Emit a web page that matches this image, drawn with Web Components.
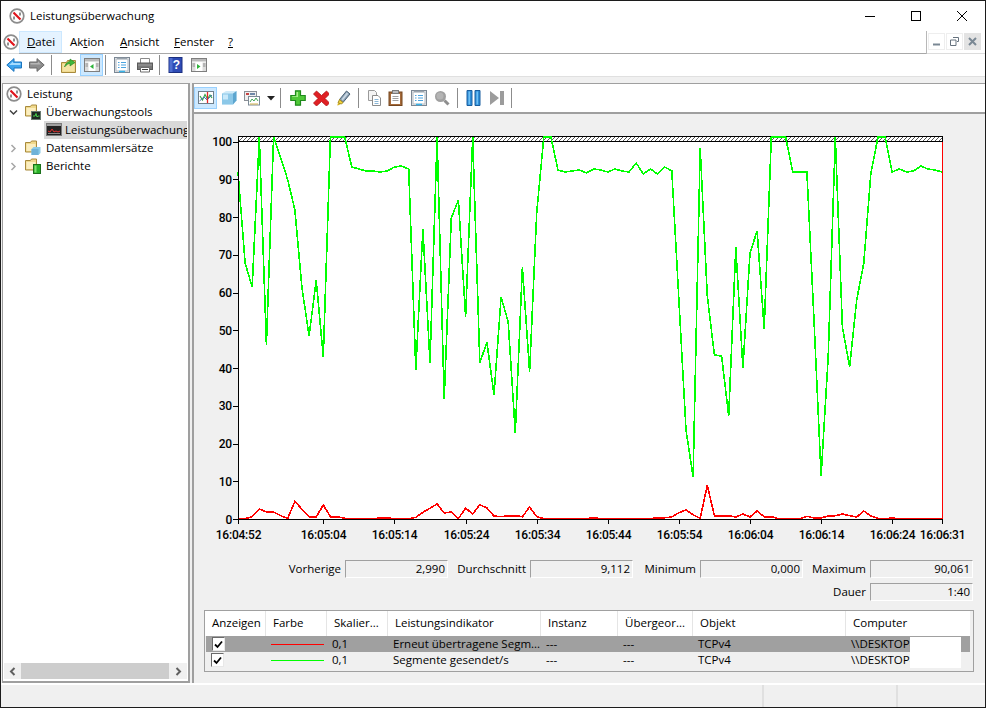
<!DOCTYPE html>
<html lang="de">
<head>
<meta charset="utf-8">
<title>Leistungsüberwachung</title>
<style>
  html, body { margin: 0; padding: 0; }
  body { font: 11.5px/16px "Open Sans", "Noto Sans", sans-serif; color: #000; background: #f0f0f0; }
</style>
</head>
<body>
<perf-window>
  <title-bar slot="title">Leistungsüberwachung</title-bar>
  <menu-bar slot="menu">
    <menu-entry active style="width:43px"><u>D</u>atei</menu-entry>
    <menu-entry style="width:50px">Ak<u>t</u>ion</menu-entry>
    <menu-entry style="width:54px"><u>A</u>nsicht</menu-entry>
    <menu-entry style="width:54px"><u>F</u>enster</menu-entry>
    <menu-entry style="width:24px"><u>?</u></menu-entry>
  </menu-bar>
  <main-toolbar slot="toolbar"></main-toolbar>
  <tree-pane slot="tree">
    <tree-item icon="compass" level="0">Leistung</tree-item>
    <tree-item icon="foldermon" level="1" arrow="open">Überwachungstools</tree-item>
    <tree-item icon="perf" level="2" selected>Leistungsüberwachung</tree-item>
    <tree-item icon="foldercube" level="1" arrow="closed">Datensammlersätze</tree-item>
    <tree-item icon="folderrep" level="1" arrow="closed">Berichte</tree-item>
  </tree-pane>
  <chart-toolbar slot="charttools"></chart-toolbar>
  <perf-chart slot="chart"></perf-chart>
  <stat-panel slot="stats">
    <stat-box value="2,990">Vorherige</stat-box>
    <stat-box value="9,112">Durchschnitt</stat-box>
    <stat-box value="0,000">Minimum</stat-box>
    <stat-box value="90,061">Maximum</stat-box>
    <stat-box value="1:40" style="grid-column:4">Dauer</stat-box>
  </stat-panel>
  <counter-legend slot="legend"></counter-legend>
  <status-bar slot="status"></status-bar>
</perf-window>

<script>
const ICONS = {
  compass: `<circle cx="8" cy="8" r="6.8" fill="#fff" stroke="#8c8c8c" stroke-width="1.7"/><path d="M4.5 4.5L11.5 11.5" stroke="#e0141c" stroke-width="2.2"/><path d="M5 8.5v3M11 4.5v3" stroke="#222" stroke-width="1"/>`,
  back: `<path d="M.8 8L8 1.6V5h7.5v6H8v3.4z" fill="#3ea4ee" stroke="#1c74bd"/><path d="M3 8L7 4.5V6h7.5v2z" fill="#a6dcff"/>`,
  forward: `<path d="M15.2 8L8 1.6V5H.5v6H8v3.4z" fill="#8c8c8c" stroke="#6b6b6b"/><path d="M1.5 6H9V4.5L12 7.5H1.5z" fill="#b5b5b5"/>`,
  folderup: `<path d="M.5 5.5h5l1-2h8v12H.5z" fill="#ecd27f" stroke="#a88a3c"/><path d="M1.5 7h12v7.5h-12z" fill="#f5e3a4"/><path d="M3.5 10C5 5 8 4.5 9 4.5V2l5 3.500-5 3.500V6.500C7.500 6.500 5.500 7.500 3.500 10z" fill="#3fb83a" stroke="#23811f" stroke-width=".6"/>`,
  paneleft: `<rect x=".5" y="1.500" width="15" height="13" fill="#fff" stroke="#7e7e7e"/><rect x="1" y="2" width="14" height="2.500" fill="#b9b9b9"/><path d="M1 5.500h3.500v8.500H1zM11.500 5.500H15v8.500h-3.500z" fill="#dcdcdc"/><path d="M1.500 7h2.500M1.500 9h2.500M12 7h2.500M12 9h2.500" stroke="#8e8e8e"/><path d="M9.500 7v5L6 9.500z" fill="#2eb33a"/>`,
  paneright: `<rect x=".5" y="1.500" width="15" height="13" fill="#fff" stroke="#7e7e7e"/><rect x="1" y="2" width="14" height="2.500" fill="#b9b9b9"/><path d="M1 5.500h3.500v8.500H1zM11.500 5.500H15v8.500h-3.500z" fill="#dcdcdc"/><path d="M1.500 7h2.500M1.500 9h2.500M12 7h2.500M12 9h2.500" stroke="#8e8e8e"/><path d="M6 7v5l3.500-2.500z" fill="#2eb33a"/>`,
  props: `<rect x=".5" y=".5" width="15" height="15" fill="#eee" stroke="#7b8794"/><rect x="2" y="2" width="12" height="12" fill="#fff" stroke="#b0b8c0"/><path d="M3 1.500h10" stroke="#9aa4ae" stroke-width="1.500"/><path d="M4 5.500h1.500M7 5.500h5M4 8h1.500M7 8h5M4 10.500h1.500M7 10.500h5" stroke="#4aa3df"/><path d="M5 14.500h6" stroke="#37b3ea" stroke-width="1.500"/>`,
  print: `<path d="M3.500 1.500h9v5h-9z" fill="#fff" stroke="#8a8a8a"/><rect x=".5" y="6" width="15" height="6.500" fill="#787878" stroke="#5a5a5a"/><path d="M1 8h14" stroke="#9e9e9e"/><path d="M3.500 10.500h9v4.500h-9z" fill="#fff" stroke="#6d6d6d"/><path d="M5 12.500h6" stroke="#3d3d3d"/>`,
  help: `<rect x="1" y=".5" width="13" height="15" fill="#2e4bb5" stroke="#1b2f80"/><path d="M1.500 1h3v14h-3z" fill="#4e6ed0"/><text x="8.500" y="12" font-family="Liberation Sans" font-size="12" font-weight="700" fill="#fff" text-anchor="middle">?</text>`,
  graph: `<rect x=".5" y="1.500" width="15" height="12" fill="#fff" stroke="#6f7f8c"/><path d="M2 6l2.500 4L7 4.500 9.500 9 12 5l2 3" fill="none" stroke="#38a84a" stroke-width="1.200"/><path d="M1.500 11L6 7l3 3 5-5" fill="none" stroke="#4a6fb8"/><path d="M9.500 2v11" stroke="#e3262b" stroke-width="1.300"/>`,
  cube: `<path d="M1 3.500L5 1h10.500v9.500L12 14.500H1z" fill="#cfeaf8"/><path d="M1 3.500h11v11H1z" fill="#8cc8e8"/><path d="M12 3.500l3.500-2.500v9.500L12 14.500z" fill="#5da6cf"/><path d="M2 4.500h5v5H2z" fill="#c9e9fa"/>`,
  report: `<rect x=".5" y="1.500" width="12" height="9" fill="#eee" stroke="#8a8f96"/><path d="M2 3h3v2H2z" fill="#c74343"/><path d="M6 3h5v2H6z" fill="#6e88a8"/><rect x="4.500" y="6.500" width="11" height="8.500" fill="#fff" stroke="#7c8a96"/><path d="M6 12l2-3 2 2 2-3 2 3" fill="none" stroke="#46a85a"/><path d="M6 14h8" stroke="#d1b34b"/>`,
  plus: `<path d="M5.500.8h5v4.700h4.700v5h-4.700v4.700h-5v-4.700H.8v-5h4.700z" fill="#4fc838" stroke="#1f8a1c" stroke-width="1.200"/><path d="M6.500 2h1.500v5H2.200v-.8h4.300z" fill="#a8ee8c"/>`,
  cross: `<path d="M3.500 1L8.500 5.500 13.500 1l3 3-4.500 4.500 4.500 4.500-3 3-5-4.500-5 4.500-3-3L5 8.500.5 4z" fill="#e02024" stroke="#b01418" stroke-width=".8"/>`,
  pen: `<path d="M10.500 1l3.500 3-7 8.500-3.500-3z" fill="#8aa0b4" stroke="#4c6074"/><path d="M3.500 9.500l3.500 3-1.500 1.500-3.500-1z" fill="#f2d43a" stroke="#a38a20"/><path d="M2 13l-.8 2.500 3-.8z" fill="#d7b21e"/><path d="M10.800 2.500l1.500 1.300-5.500 6.700-1.300-1.200z" fill="#c9d6e2"/>`,
  copy: `<path d="M1.500.5h6l2 2v8h-8z" fill="#f4f4f4" stroke="#9a9a9a"/><path d="M5.500 5.500h5.500l2.500 2.500v7.500h-8z" fill="#fff" stroke="#8b8b8b"/><path d="M7.500 9.500h4M7.500 11.500h4M7.500 13.500h4" stroke="#8ab6d6"/>`,
  paste: `<rect x="1" y="2" width="13" height="13.500" fill="#a56a3a" stroke="#74461f"/><rect x="3" y="4" width="9" height="10" fill="#fff"/><rect x="4.500" y=".5" width="6" height="3" fill="#bcbcbc" stroke="#7a7a7a"/><path d="M4.500 6.500h6M4.500 8.500h6M4.500 10.500h6" stroke="#a0a0a0"/>`,
  glass: `<circle cx="6.500" cy="6.500" r="5.500" fill="#a0a0a0"/><circle cx="6" cy="6" r="3.500" fill="#b4b4b4"/><path d="M10.500 10.500l4 4" stroke="#8e8e8e" stroke-width="3"/>`,
  pause: `<path d="M1 .5h5v15H1zM9 .5h5v15H9z" fill="#2f8fd8" stroke="#1a5fa0"/><path d="M2.500 1.500h1.500v13H2.500zM10.500 1.500h1.500v13h-1.500z" fill="#6ec0f5"/>`,
  step: `<path d="M1 1l9 7-9 7z" fill="#9c9c9c"/><path d="M11 1h4v14h-4z" fill="#9c9c9c"/>`,
  foldermon: `<path d="M.5 2.500h5l1-1.500h5v11H.5z" fill="#f0d98c" stroke="#a88a3c"/><rect x="1.500" y="4" width="9" height="7" fill="#fbeec0"/><rect x="6.500" y="7.500" width="9" height="8" fill="#1e2a22" stroke="#6a7a70"/><path d="M8 12h2l1-2.500 1 3.500 1-1h1.500" fill="none" stroke="#46d24a"/>`,
  foldercube: `<path d="M.5 2.500h5l1-1.500h5v11H.5z" fill="#f0d98c" stroke="#a88a3c"/><rect x="1.500" y="4" width="9" height="7" fill="#fbeec0"/><path d="M6.500 9l2-2h7v6l-2 2h-7z" fill="#8ccbe8"/><path d="M6.500 9h7v6h-7z" fill="#6eb2d8"/>`,
  folderrep: `<path d="M.5 2.500h5l1-1.500h5v11H.5z" fill="#f0d98c" stroke="#a88a3c"/><rect x="1.500" y="4" width="9" height="7" fill="#fbeec0"/><rect x="8.500" y="6.500" width="7" height="9" fill="#28b028" stroke="#1a701a"/><path d="M9.500 7.500h2v7h-2z" fill="#80e070"/>`,
  perf: `<rect x=".5" y="1.500" width="15" height="12" fill="#222" stroke="#7a7a7a"/><path d="M1 3h14" stroke="#a0a0a0" stroke-width="2"/><path d="M2 9l2 1 2-3 2 3 2-1 2 1 2-1" fill="none" stroke="#e03030"/><path d="M2 11.500h12" stroke="#888"/>`
};

class UiIcon extends HTMLElement {
  connectedCallback() {
    const w = this.getAttribute('w') || 16;
    this.attachShadow({ mode: 'open' }).innerHTML = `
      <style>:host { display: block; width: ${w}px; height: 16px; flex: none; } svg { display: block; }</style>
      <svg width="${w}" height="16" viewBox="0 0 16 16">${ICONS[this.getAttribute('name')]}</svg>`;
  }
}
customElements.define('ui-icon', UiIcon);

class PerfWindow extends HTMLElement {
  constructor() {
    super();
    this.attachShadow({ mode: 'open' }).innerHTML = `
      <style>
        :host { display: flex; flex-direction: column; width: 986px; height: 708px; box-sizing: border-box; border: 1px solid #1c1c1c; background: #f0f0f0; overflow: hidden; }
        #main { flex: 1; min-height: 0; display: flex; padding-left: 1px; margin-top: 6px; border-bottom: 2px solid #fff; }
        #right { flex: 1; min-width: 0; margin-left: 2px; border-left: 2px solid #9f9f9f; border-top: 1px solid #9f9f9f; display: flex; flex-direction: column; }
      </style>
      <slot name="title"></slot>
      <slot name="menu"></slot>
      <slot name="toolbar"></slot>
      <div id="main">
        <slot name="tree"></slot>
        <div id="right">
          <slot name="charttools"></slot>
          <slot name="chart"></slot>
          <slot name="stats"></slot>
          <slot name="legend"></slot>
        </div>
      </div>
      <slot name="status"></slot>`;
  }
}
customElements.define('perf-window', PerfWindow);

class TitleBar extends HTMLElement {
  constructor() {
    super();
    this.attachShadow({ mode: 'open' }).innerHTML = `
      <style>
        :host { display: flex; align-items: center; height: 30px; flex: none; background: #fff; }
        ui-icon { margin: 0 5px 0 8px; }
        #text { flex: 1; }
        .btn { width: 46px; height: 30px; display: flex; align-items: center; justify-content: center; }
        svg { display: block; }
      </style>
      <ui-icon name="compass"></ui-icon>
      <div id="text"><slot></slot></div>
      <div class="btn"><svg width="10" height="10"><path d="M0 5.500h10" stroke="#000"/></svg></div>
      <div class="btn"><svg width="10" height="10"><rect x=".5" y=".5" width="9" height="9" fill="none" stroke="#000"/></svg></div>
      <div class="btn"><svg width="10" height="10"><path d="M0 0l10 10M10 0L0 10" stroke="#000"/></svg></div>`;
  }
}
customElements.define('title-bar', TitleBar);

class MenuBar extends HTMLElement {
  constructor() {
    super();
    this.attachShadow({ mode: 'open' }).innerHTML = `
      <style>
        :host { display: flex; align-items: flex-start; height: 23px; box-sizing: border-box; flex: none; background: #fff; box-shadow: inset 0 -1px 0 #dcdcdc; }
        ui-icon { margin: 3px 0 0 2px; }
        #items { flex: 1; display: flex; height: 23px; box-sizing: border-box; border-bottom: 1px solid #a8a8a8; }
        #mdi { display: flex; gap: 1px; width: 59px; height: 23px; box-sizing: border-box; border-left: 1px solid #b8b8b8; padding: 2px 1px 0 1px; }
        .m { width: 17px; height: 17px; border: 1px solid #eee; box-sizing: border-box; display: flex; align-items: center; justify-content: center; }
        .x { background: #e3e3e3; border-color: #e3e3e3; }
      </style>
      <ui-icon name="compass"></ui-icon>
      <div id="items"><slot></slot></div>
      <div id="mdi">
        <div class="m"><svg width="9" height="9"><path d="M1 7.500h7" stroke="#7a8894" stroke-width="2"/></svg></div>
        <div class="m"><svg width="9" height="9"><path d="M3 .5h5.500v4H7M.5 3h5.500v5.500H.5z" fill="none" stroke="#66727e"/></svg></div>
        <div class="m x"><svg width="9" height="9"><path d="M1 1l7 7M8 1L1 8" stroke="#7a8894" stroke-width="2"/></svg></div>
      </div>`;
  }
}
customElements.define('menu-bar', MenuBar);

class MenuEntry extends HTMLElement {
  constructor() {
    super();
    this.attachShadow({ mode: 'open' }).innerHTML = `
      <style>
        :host { display: block; height: 22px; line-height: 21px; padding-left: 8px; box-sizing: border-box; flex: none; }
        :host([active]) { background: #e5f3ff; box-shadow: inset 0 0 0 1px #cce8ff; }
      </style>
      <slot></slot>`;
  }
}
customElements.define('menu-entry', MenuEntry);

class ToolButton extends HTMLElement {
  constructor() {
    super();
    this.attachShadow({ mode: 'open' }).innerHTML = `
      <style>
        :host { display: flex; align-items: center; justify-content: center; height: 22px; width: 23px; box-sizing: border-box; flex: none; }
        :host([on]) { background: #cce8ff; box-shadow: inset 0 0 0 1px #99d1ff; }
      </style>
      <slot></slot>`;
  }
}
customElements.define('tool-button', ToolButton);

class ToolSep extends HTMLElement {
  constructor() {
    super();
    this.attachShadow({ mode: 'open' }).innerHTML = `
      <style>:host { display: block; width: 1px; height: 20px; background: #8c8c8c; flex: none; margin: 0 3px 0 2.5px; }</style>`;
  }
}
customElements.define('tool-sep', ToolSep);

class MainToolbar extends HTMLElement {
  constructor() {
    super();
    this.attachShadow({ mode: 'open' }).innerHTML = `
      <style>
        :host { display: flex; align-items: center; height: 23px; box-sizing: border-box; flex: none; background: #fff; border-bottom: 1px solid #e0e0e0; padding-left: 1.5px; }
      </style>
      <tool-button><ui-icon name="back"></ui-icon></tool-button>
      <tool-button><ui-icon name="forward"></ui-icon></tool-button>
      <tool-sep></tool-sep>
      <tool-button style="margin-left:2px"><ui-icon name="folderup"></ui-icon></tool-button>
      <tool-button on><ui-icon name="paneleft"></ui-icon></tool-button>
      <tool-sep style="margin-left:2px"></tool-sep>
      <tool-button style="margin-left:1.500px"><ui-icon name="props"></ui-icon></tool-button>
      <tool-button><ui-icon name="print"></ui-icon></tool-button>
      <tool-sep></tool-sep>
      <tool-button style="margin-left:1.500px"><ui-icon name="help"></ui-icon></tool-button>
      <tool-button><ui-icon name="paneright"></ui-icon></tool-button>`;
  }
}
customElements.define('main-toolbar', MainToolbar);

class TreePane extends HTMLElement {
  constructor() {
    super();
    this.attachShadow({ mode: 'open' }).innerHTML = `
      <style>
        :host { display: flex; flex-direction: column; width: 188px; box-sizing: border-box; flex: none; background: #fff; border: 1px solid #9f9f9f; border-width: 1px 2px 2px 1px; }
        #list { flex: 1; padding: 1px 0 0 0; overflow: hidden; }
        #scroll { height: 16px; margin: 0 1px 2px 1px; display: flex; align-items: center; background: #f0f0f0; }
        #thumb { width: 148px; height: 16px; background: #cdcdcd; }
        .a { width: 17px; display: flex; justify-content: center; }
      </style>
      <div id="list"><slot></slot></div>
      <div id="scroll">
        <div class="a"><svg width="7" height="9"><path d="M5.500 1L2 4.500 5.500 8" fill="none" stroke="#606060" stroke-width="2"/></svg></div>
        <div id="thumb"></div>
        <div style="flex:1"></div>
        <div class="a"><svg width="7" height="9"><path d="M1.500 1L5 4.500 1.500 8" fill="none" stroke="#606060" stroke-width="2"/></svg></div>
      </div>`;
  }
}
customElements.define('tree-pane', TreePane);

class TreeItem extends HTMLElement {
  connectedCallback() {
    const level = +this.getAttribute('level');
    const arrow = this.getAttribute('arrow');
    const glyph = arrow === 'open'
      ? `<svg width="9" height="9"><path d="M1 2.500l3.500 3.500L8 2.500" fill="none" stroke="#404040" stroke-width="1.500"/></svg>`
      : arrow === 'closed'
      ? `<svg width="9" height="9"><path d="M2.500 1L6 4.500 2.500 8" fill="none" stroke="#a6a6a6" stroke-width="1.500"/></svg>`
      : '';
    const pad = [3, 22, 41][level];
    this.attachShadow({ mode: 'open' }).innerHTML = `
      <style>
        :host { display: flex; align-items: center; height: 18px; white-space: nowrap; }
        #arrow { width: 9px; flex: none; margin-left: ${pad - 16}px; margin-right: 7px; display: flex; }
        #row { flex: 1; min-width: 0; display: flex; align-items: center; height: 18px; margin-right: ${level === 2 ? 1 : 0}px; gap: 5px; overflow: hidden; }
        :host([selected]) #row { background: #d9d9d9; gap: 3px; }
        ui-icon { margin-left: ${level === 2 ? 2 : 0}px; }
      </style>
      <div id="arrow">${glyph}</div>
      <div id="row">
        <ui-icon name="${this.getAttribute('icon')}"></ui-icon>
        <span><slot></slot></span>
      </div>`;
    if (level === 0) {
      this.shadowRoot.getElementById('arrow').style.cssText = 'display:none';
      this.shadowRoot.getElementById('row').style.marginLeft = pad + 'px';
    }
  }
}
customElements.define('tree-item', TreeItem);

class ChartToolbar extends HTMLElement {
  constructor() {
    super();
    this.attachShadow({ mode: 'open' }).innerHTML = `
      <style>
        :host { display: flex; align-items: center; height: 30px; box-sizing: border-box; flex: none; background: #fff; border-bottom: 2px solid #9f9f9f; }
        #arrow { width: 9px; height: 5px; margin: 0 3px; }
      </style>
      <tool-button on><ui-icon name="graph"></ui-icon></tool-button>
      <tool-button><ui-icon name="cube"></ui-icon></tool-button>
      <tool-button style="width:24px"><ui-icon name="report"></ui-icon></tool-button>
      <svg id="arrow" width="9" height="5"><path d="M0 0h8L4 4.500z" fill="#222"/></svg>
      <tool-sep style="margin-left:1px"></tool-sep>
      <tool-button style="margin-left:2px"><ui-icon name="plus"></ui-icon></tool-button>
      <tool-button><ui-icon name="cross"></ui-icon></tool-button>
      <tool-button><ui-icon name="pen"></ui-icon></tool-button>
      <tool-sep></tool-sep>
      <tool-button style="margin-left:2px"><ui-icon name="copy"></ui-icon></tool-button>
      <tool-button style="margin-left:-2px"><ui-icon name="paste"></ui-icon></tool-button>
      <tool-button><ui-icon name="props"></ui-icon></tool-button>
      <tool-button><ui-icon name="glass"></ui-icon></tool-button>
      <tool-sep style="margin-left:3.500px"></tool-sep>
      <tool-button style="margin-left:1.500px"><ui-icon name="pause"></ui-icon></tool-button>
      <tool-button><ui-icon name="step"></ui-icon></tool-button>
      <tool-sep></tool-sep>`;
  }
}
customElements.define('chart-toolbar', ChartToolbar);

// y pixel per sample, read off the reference (x step is 704/99)
const GREEN = [172,263,287,137,345,137,158,180,210,288,336,280,357,137,137,137,167,169,171,171,172,171,167,166,169,370,229,363,137,399,218,200,317,137,363,342,395,297,322,433,267,372,213,137,137,170,172,171,170,173,169,170,172,169,171,172,163,174,169,174,167,171,300,430,477,148,296,355,356,416,247,368,253,231,329,137,137,137,172,172,172,320,476,357,137,327,367,300,263,173,137,137,172,169,172,171,166,169,170,172];
const RED_Z = [536,536,530,507,516,516,527,535,484,508,530,531,495,530,530,535,536,536,536,536,534,534,536,536,536,532,517,505,492,519,516,536,504,522,494,504,528,530,527,527,530,501,530,536,536,536,536,536,536,536,533,536,536,536,536,536,536,536,536,533,533,531,518,510,524,535,436,527,527,527,531,522,531,513,530,530,536,536,536,536,529,534,534,528,527,522,527,531,513,528,535,536,534,536,536,536,536,536,536,536];

class PerfChart extends HTMLElement {
  connectedCallback() {
    const pts = ys => ys.map((y, i) => `${(238 + i * 704 / 99).toFixed(1)},${y}`).join(' ');
    const red = RED_Z.map(z => +(340 + z / 3).toFixed(1));
    const vals = [100,90,80,70,60,50,40,30,20,10,0];
    const yLabels = vals.map((v, i) => {
      const y = 141.5 + i * 37.75;
      return `<path d="M233 ${y.toFixed(0)}.5h5" stroke="#000"/><text x="232" y="${(y + 4.500).toFixed(1)}" text-anchor="end">${v}</text>`;
    }).join('');
    const times = [[238,'16:04:52'],[323,'16:05:04'],[394,'16:05:14'],[466,'16:05:24'],[537,'16:05:34'],[608,'16:05:44'],[679,'16:05:54'],[750,'16:06:04'],[821,'16:06:14'],[892,'16:06:24'],[942,'16:06:31']];
    const xLabels = times.map(([x, t]) => `<path d="M${x}.5 519v5" stroke="#000"/><text x="${x + 0.5}" y="539" text-anchor="middle">${t}</text>`).join('');
    this.attachShadow({ mode: 'open' }).innerHTML = `
      <style>
        :host { display: block; height: 438px; flex: none; }
        svg { display: block; }
        text { font: 500 12px Roboto, sans-serif; letter-spacing: -.2px; fill: #000; }
      </style>
      <svg width="790" height="438" viewBox="194 114 790 438">
        <defs><pattern id="hatch" width="4" height="4" patternUnits="userSpaceOnUse"><rect width="4" height="4" fill="#fff"/><path d="M0 4L4 0M-1 1L1 -1M3 5L5 3" stroke="#555" stroke-width="1"/></pattern></defs>
        <rect x="238" y="142" width="704" height="377" fill="#fff"/>
        <rect x="238.500" y="136.500" width="704" height="5" fill="url(#hatch)" stroke="#000"/>
        <g shape-rendering="crispEdges">
          <polyline points="${pts(GREEN)}" fill="none" stroke="#00ff00" stroke-width="1.600"/>
          <polyline points="${pts(red)}" fill="none" stroke="#ff0000" stroke-width="1.600"/>
          <path d="M942.500 142v377" stroke="#ff0000"/>
          <path d="M238.500 137v383M238 519.500h705" stroke="#000" fill="none"/>
          ${yLabels.replace(/<text.*?<\/text>/g, '')}
          ${xLabels.replace(/<text.*?<\/text>/g, '')}
        </g>
        ${yLabels.replace(/<path.*?\/>/g, '')}
        ${xLabels.replace(/<path.*?\/>/g, '')}
      </svg>`;
  }
}
customElements.define('perf-chart', PerfChart);

class StatPanel extends HTMLElement {
  constructor() {
    super();
    this.attachShadow({ mode: 'open' }).innerHTML = `
      <style>
        :host { display: grid; grid-template-columns: 254px 185px 170px 170px; row-gap: 5px; height: 58px; flex: none; align-content: start; padding-top: 8px; box-sizing: border-box; }
      </style>
      <slot></slot>`;
  }
}
customElements.define('stat-panel', StatPanel);

class StatBox extends HTMLElement {
  connectedCallback() {
    this.attachShadow({ mode: 'open' }).innerHTML = `
      <style>
        :host { display: flex; justify-content: flex-end; align-items: center; gap: 4px; height: 18px; }
        #v { width: 103px; height: 18px; box-sizing: border-box; border: 1px solid; border-color: #a0a0a0 #fff #fff #a0a0a0; text-align: right; padding-right: 2px; line-height: 16px; }
      </style>
      <span><slot></slot></span>
      <div id="v">${this.getAttribute('value')}</div>`;
  }
}
customElements.define('stat-box', StatBox);

class CounterLegend extends HTMLElement {
  constructor() {
    super();
    const heads = ['Anzeigen','Farbe','Skalier...','Leistungsindikator','Instanz','Übergeor...','Objekt','Computer'];
    const row = (cls, color, name) => `
      <div class="row ${cls}">
        <div class="c chk"><span class="box"><svg width="9" height="9"><path d="M1 4.500l2.500 2.500L8 1.500" fill="none" stroke="#000" stroke-width="1.800"/></svg></span></div>
        <div class="c"><span class="line" style="background:${color}"></span></div>
        <div class="c">0,1</div>
        <div class="c">${name}</div>
        <div class="c">---</div>
        <div class="c">---</div>
        <div class="c">TCPv4</div>
        <div class="c">\\\\DESKTOP-</div>
      </div>`;
    this.attachShadow({ mode: 'open' }).innerHTML = `
      <style>
        :host { display: block; position: relative; width: 770px; height: 62px; margin-left: 10px; box-sizing: border-box; flex: none; border: 1px solid #a0a0a0; background: #f0f0f0; }
        .row { display: grid; grid-template-columns: 61px 61px 61px 153px 77px 75px 153px 124px; width: 765px; white-space: nowrap; }
        .head { height: 25px; background: #fff; line-height: 24px; }
        .head div { padding-left: 7px; border-right: 1px solid #e5e5e5; box-sizing: border-box; overflow: hidden; }
        .head div:last-child { border-right: 0; }
        .r { height: 16px; line-height: 16px; }
        .c { padding-left: 5px; box-sizing: border-box; overflow: hidden; display: flex; align-items: center; }
        .row.sel { background: #a0a0a0; margin-left: 1px; width: 764px; grid-template-columns: 60px 61px 61px 153px 77px 75px 153px 124px; }
        .chk { padding-left: 6px; }
        .box { width: 13px; height: 14px; box-sizing: border-box; background: #fff; border: 1px solid; border-color: #6a6a6a #e8e8e8 #e8e8e8 #6a6a6a; display: flex; align-items: center; justify-content: center; }
        .line { display: block; width: 53px; height: 1px; }
        #mask { position: absolute; left: 705px; top: 26px; width: 51px; height: 31px; background: #fff; }
      </style>
      <div class="row head">${heads.map(h => `<div>${h}</div>`).join('')}</div>
      ${row('r sel', '#ff0000', 'Erneut übertragene Segm...')}
      ${row('r', '#00ff00', 'Segmente gesendet/s')}
      <div id="mask"></div>`;
  }
}
customElements.define('counter-legend', CounterLegend);

class StatusBar extends HTMLElement {
  constructor() {
    super();
    this.attachShadow({ mode: 'open' }).innerHTML = `
      <style>
        :host { display: grid; grid-template-columns: 763px 134px 1fr; height: 22px; flex: none; background: #f0f0f0; }
        div { border-right: 2px solid #e0e0e0; }
        div:last-child { border: 0; }
      </style>
      <div></div><div></div><div></div>`;
  }
}
customElements.define('status-bar', StatusBar);
</script>
</body>
</html>
